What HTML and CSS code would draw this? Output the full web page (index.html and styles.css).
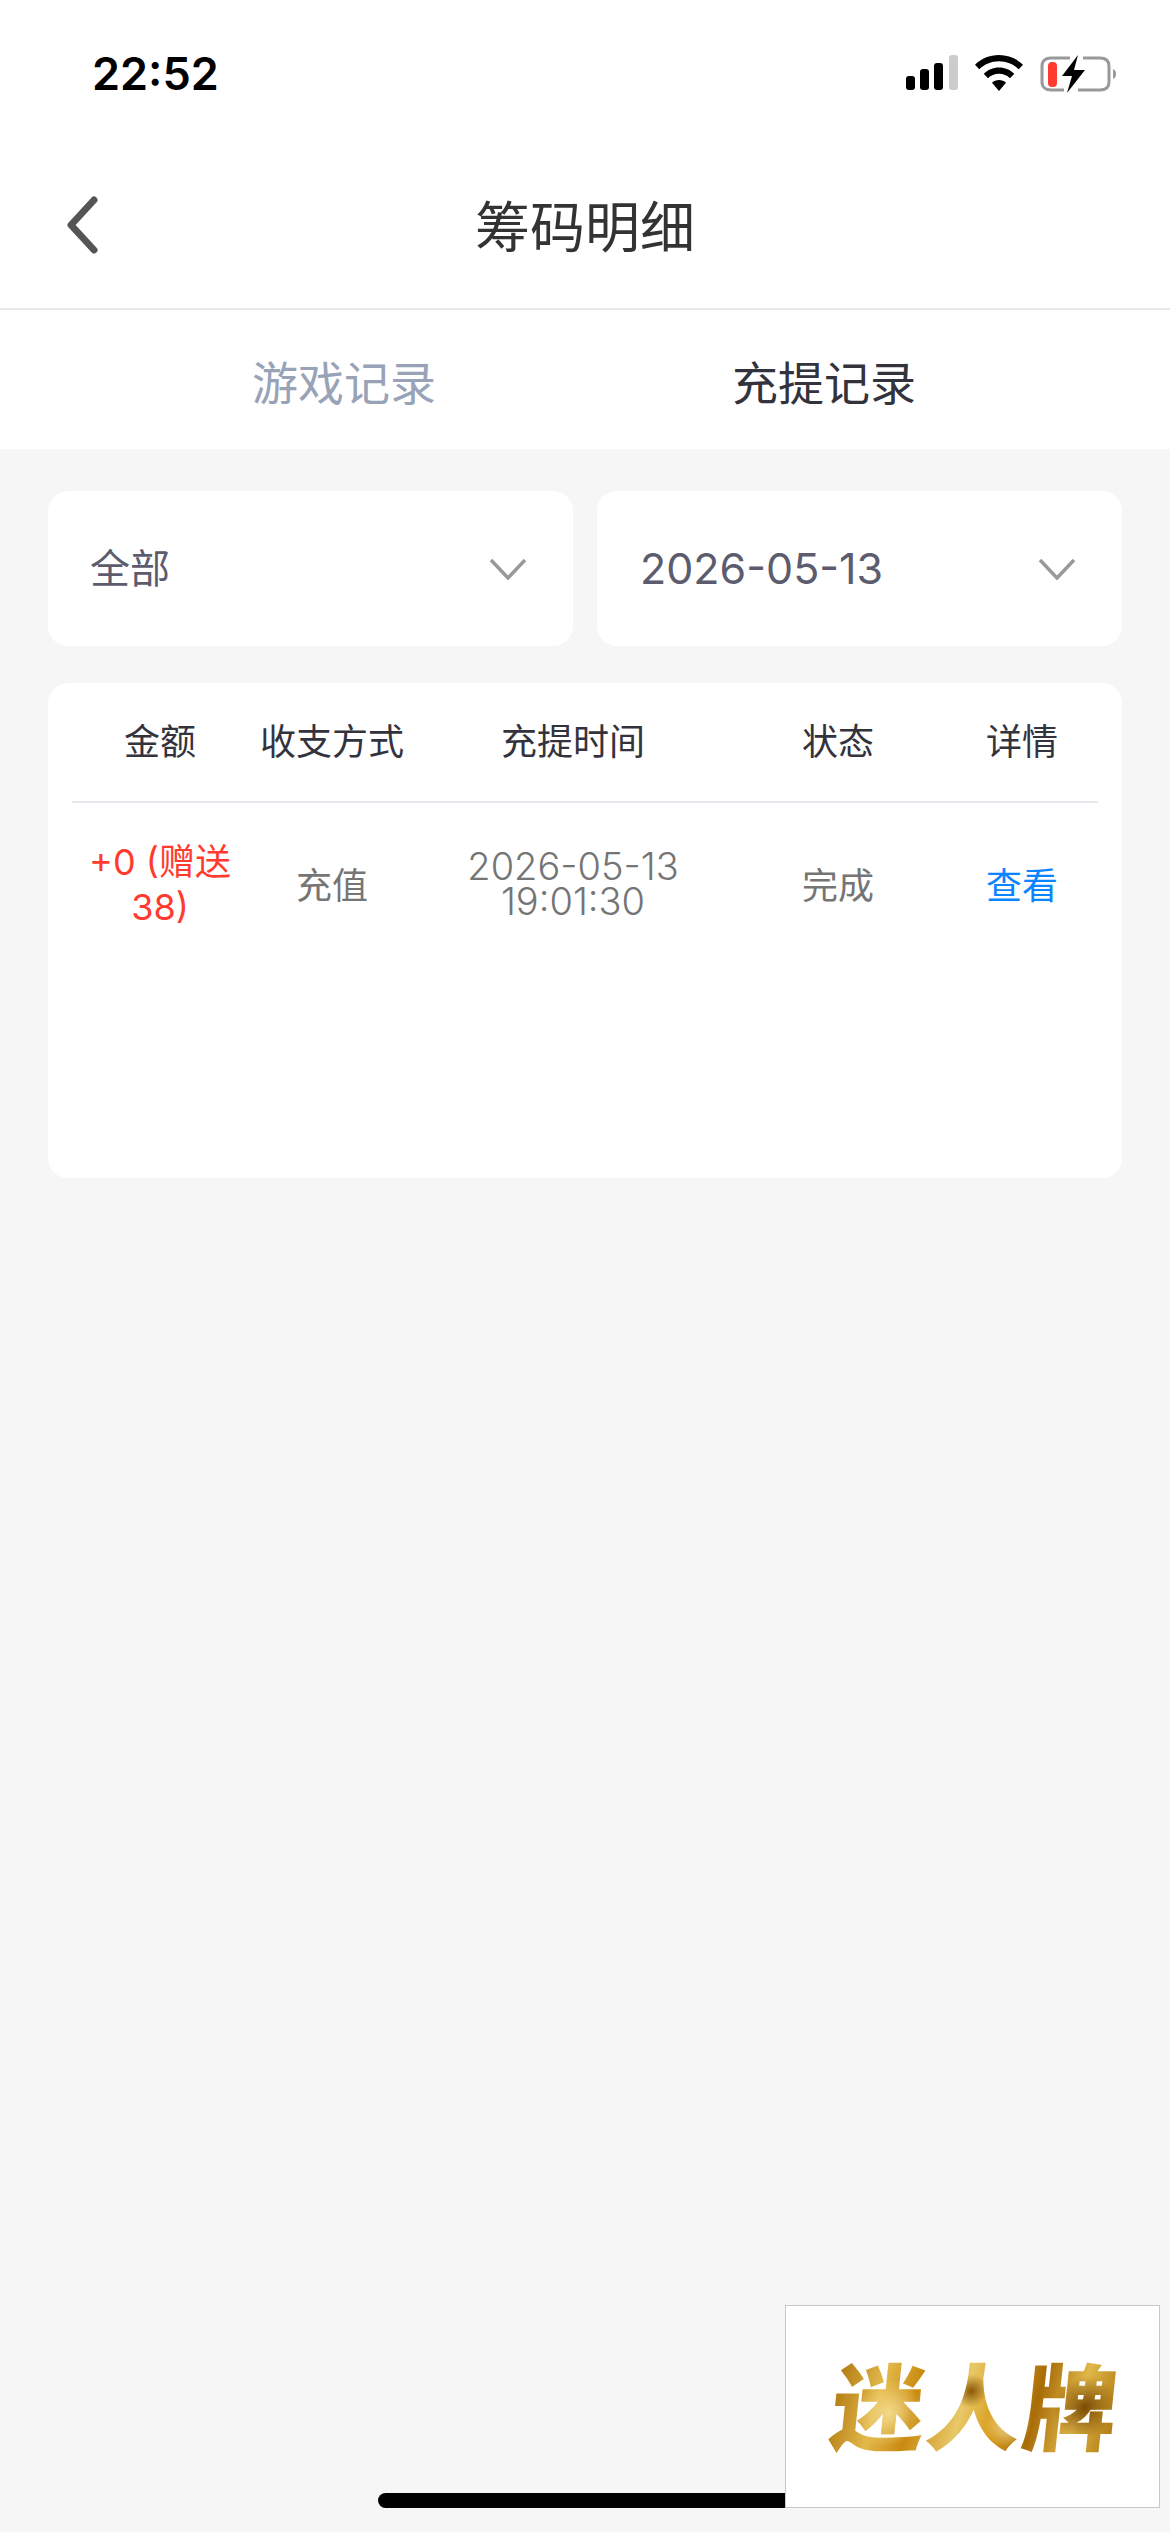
FILE: index.html
```html
<!DOCTYPE html>
<html lang="zh-CN">
<head>
    <meta charset="UTF-8">
    <meta name="viewport" content="width=device-width, initial-scale=1.0">
    <title>筹码明细</title>
    <link rel="stylesheet" href="styles.css">
</head>
<body>
    <div class="status-bar">
        <span class="status-time">22:52</span>
        <div class="status-icons">
            <svg class="icon-signal" width="52" height="36" viewBox="0 0 52 36">
                <rect x="0" y="21" width="9" height="14" rx="3" fill="#000"/>
                <rect x="14" y="14" width="9" height="21" rx="3" fill="#000"/>
                <rect x="28" y="8" width="9" height="27" rx="3" fill="#000"/>
                <rect x="43" y="0" width="9" height="35" rx="3" fill="#ccc"/>
            </svg>
            <svg class="icon-wifi" width="50" height="38" viewBox="0 0 50 38">
                <path d="M25 0C15.500 0 7 3.700 1 9.700L5.300 14.300C10.200 9.400 17.300 6.300 25 6.300S39.800 9.400 44.700 14.300L49 9.700C43 3.700 34.500 0 25 0Z" fill="#000"/>
                <path d="M25 12.500C19 12.500 13.600 14.900 9.700 18.800L14 23.300C16.800 20.500 20.700 18.800 25 18.800S33.200 20.500 36 23.300L40.300 18.800C36.400 14.900 31 12.500 25 12.500Z" fill="#000"/>
                <path d="M25 25C22.200 25 19.800 26 18 27.800L25 36L32 27.800C30.200 26 27.800 25 25 25Z" fill="#000"/>
            </svg>
            <svg class="icon-battery" width="80" height="38" viewBox="0 0 80 38">
                <path d="M24 35H11C5.500 35 2 32 2 27V11C2 6 5.500 3 11 3H30M43 3H60C66 3 69 6 69 11V27C69 32 66 35 60 35H38" fill="none" stroke="#999" stroke-width="3"/>
                <rect x="8" y="7" width="9" height="25" rx="4" fill="#ff3b30"/>
                <path d="M38 0L22 21H32L27 38L45 15H34L38 0Z" fill="#000"/>
                <path d="M73 14C75.500 15 76 17 76 19S75.500 23 73 24Z" fill="#999"/>
            </svg>
        </div>
    </div>

    <div class="nav-bar">
        <svg class="back-icon" width="36" height="60" viewBox="0 0 36 60">
            <path d="M30 5L7 30L30 55" fill="none" stroke="#555" stroke-width="7" stroke-linecap="round" stroke-linejoin="round"/>
        </svg>
        <h1 class="nav-title">筹码明细</h1>
    </div>

    <div class="tabs">
        <div class="tab">游戏记录</div>
        <div class="tab active">充提记录</div>
    </div>

    <div class="content">
        <div class="filters">
            <div class="select">
                <span class="select-all">全部</span>
                <svg width="38" height="22" viewBox="0 0 38 22"><path d="M2 2L19 20L36 2" fill="none" stroke="#999" stroke-width="3.500"/></svg>
            </div>
            <div class="select">
                <span class="select-date">2026-05-13</span>
                <svg width="38" height="22" viewBox="0 0 38 22"><path d="M2 2L19 20L36 2" fill="none" stroke="#999" stroke-width="3.500"/></svg>
            </div>
        </div>

        <div class="record-card">
            <div class="record-row record-head">
                <div>金额</div>
                <div>收支方式</div>
                <div>充提时间</div>
                <div>状态</div>
                <div>详情</div>
            </div>
            <div class="record-row record-item">
                <div class="amount">+0 (赠送38)</div>
                <div>充值</div>
                <div class="time">2026-05-13<br>19:01:30</div>
                <div>完成</div>
                <div class="detail-link">查看</div>
            </div>
        </div>
    </div>

    <div class="home-indicator"></div>
    <div class="brand-box"><span class="brand-text">迷人牌</span></div>
</body>
</html>
```

FILE: styles.css
```css
body {
    font-family: "Noto Sans CJK SC", "Noto Sans", sans-serif;
    margin: 0;
    padding: 0;
    width: 1170px;
    height: 2532px;
    overflow: hidden;
    position: relative;
    display: flex;
    flex-direction: column;
    background-color: #f6f6f6;
}

.status-bar {
    height: 132px;
    box-sizing: border-box;
    padding: 52px 50px 0 92px;
    display: flex;
    justify-content: space-between;
    align-items: flex-start;
    background-color: #fff;
}

.status-time {
    font-family: Inter, "Liberation Sans", sans-serif;
    font-size: 45px;
    font-weight: 600;
    line-height: 44px;
    color: #000;
}

.status-icons {
    display: flex;
    align-items: flex-start;
    gap: 16px;
    margin-top: 3px;
}

.nav-bar {
    height: 178px;
    box-sizing: border-box;
    display: flex;
    align-items: center;
    justify-content: center;
    position: relative;
    background-color: #fff;
    border-bottom: 2px solid #e8e8e8;
}

.back-icon {
    position: absolute;
    left: 64px;
    top: 63px;
}

.nav-title {
    margin: 0 0 -6px;
    font-size: 55px;
    font-weight: 400;
    color: #333;
}

.tabs {
    height: 139px;
    display: flex;
    justify-content: center;
    align-items: center;
    padding-right: 2px;
    box-sizing: border-box;
    background-color: #fff;
}

.tab {
    width: 480px;
    text-align: center;
    font-size: 46px;
    color: #98a3b8;
}

.tab.active {
    color: #33333d;
}

.content {
    padding: 42px 48px 0;
    display: flex;
    flex-direction: column;
    gap: 37px;
}

.filters {
    display: flex;
    gap: 24px;
}

.select {
    flex: 1;
    height: 155px;
    box-sizing: border-box;
    padding: 0 46px 0 43px;
    display: flex;
    justify-content: space-between;
    align-items: center;
    background-color: #fff;
    border-radius: 20px;
    font-size: 39px;
    color: #5c5c6e;
}

.select-all {
    margin-bottom: 6px;
    margin-left: -1px;
    font-size: 40px;
}

.select-date {
    margin-bottom: 2px;
    font-family: Inter, "Noto Sans CJK SC", sans-serif;
    font-size: 43px;
}

.record-card {
    height: 495px;
    padding: 0 24px;
    background-color: #fff;
    border-radius: 20px;
}

.record-row {
    display: grid;
    grid-template-columns: 176px 168px 314px 216px 152px;
    text-align: center;
    font-size: 36px;
}

.record-row > div {
    align-self: center;
}

.record-head {
    height: 120px;
    padding-bottom: 6px;
    box-sizing: border-box;
    color: #33333d;
    border-bottom: 2px solid #e8e9ef;
}

.record-item {
    height: 160px;
    color: #757575;
}

.amount {
    padding: 4px 8px 0;
    font-family: Inter, "Noto Sans CJK SC", sans-serif;
    line-height: 45px;
    color: #ff3b30;
}

.time {
    padding-top: 2px;
    font-family: Inter, "Noto Sans CJK SC", sans-serif;
    font-size: 38px;
    font-weight: 300;
    line-height: 35px;
}

.detail-link {
    color: #0a84ff;
}

.home-indicator {
    position: absolute;
    left: 378px;
    top: 2493px;
    width: 414px;
    height: 15px;
    border-radius: 8px;
    background-color: #000;
}

.brand-box {
    position: absolute;
    left: 785px;
    top: 2305px;
    width: 375px;
    height: 203px;
    box-sizing: border-box;
    padding: 0 0 10px 8px;
    border: 1px solid #c8c8c8;
    background-color: #fff;
    display: flex;
    align-items: center;
    justify-content: center;
}

.brand-text {
    font-size: 94px;
    line-height: 110px;
    font-weight: 900;
    letter-spacing: 2px;
    transform: skewX(-6deg);
    background:
        radial-gradient(circle at 20% 60%, #f3d98a 0, rgba(243, 217, 138, 0) 14%),
        radial-gradient(circle at 48% 40%, #8a5606 0, rgba(138, 86, 6, 0) 10%),
        radial-gradient(circle at 62% 70%, #f2dc9a 0, rgba(242, 220, 154, 0) 12%),
        radial-gradient(circle at 88% 55%, #7a4a04 0, rgba(122, 74, 4, 0) 12%),
        linear-gradient(100deg, #a87008 0%, #e3b94a 18%, #c98a10 30%, #e8c868 46%, #d69a18 58%, #a86c08 70%, #e0b84a 84%, #a87008 100%);
    -webkit-background-clip: text;
    background-clip: text;
    color: transparent;
}
```
